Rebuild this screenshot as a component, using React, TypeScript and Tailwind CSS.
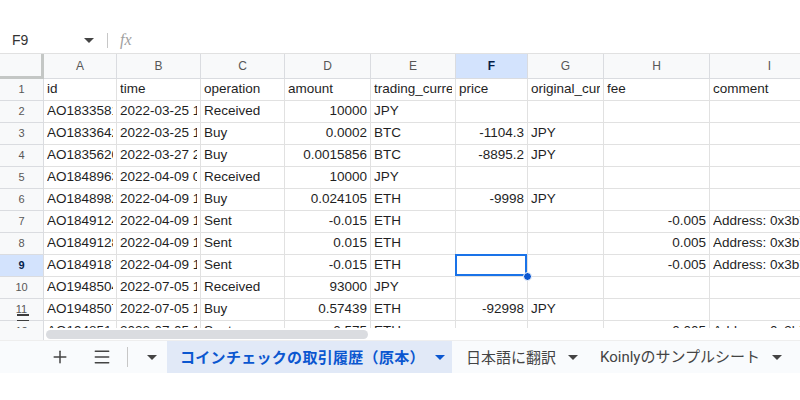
import { Plus, Menu } from "lucide-react";

type Row = { n: number; cells: (string | number | null)[] };

const cols = [
  { k: "A", w: 73 },
  { k: "B", w: 84 },
  { k: "C", w: 84 },
  { k: "D", w: 86 },
  { k: "E", w: 85 },
  { k: "F", w: 72 },
  { k: "G", w: 76 },
  { k: "H", w: 106 },
  { k: "I", w: 120 },
];

const rows: Row[] = [
  { n: 1, cells: ["id", "time", "operation", "amount", "trading_currency", "price", "original_currency", "fee", "comment"] },
  { n: 2, cells: ["AO18335812", "2022-03-25 13:11:02", "Received", 10000, "JPY", null, null, null, null] },
  { n: 3, cells: ["AO18336421", "2022-03-25 13:40:18", "Buy", 0.0002, "BTC", -1104.3, "JPY", null, null] },
  { n: 4, cells: ["AO18356205", "2022-03-27 21:05:44", "Buy", 0.0015856, "BTC", -8895.2, "JPY", null, null] },
  { n: 5, cells: ["AO18489633", "2022-04-09 09:12:51", "Received", 10000, "JPY", null, null, null, null] },
  { n: 6, cells: ["AO18489820", "2022-04-09 10:02:37", "Buy", 0.024105, "ETH", -9998, "JPY", null, null] },
  { n: 7, cells: ["AO18491241", "2022-04-09 10:31:09", "Sent", -0.015, "ETH", null, null, -0.005, "Address: 0x3b7c2f"] },
  { n: 8, cells: ["AO18491288", "2022-04-09 10:31:09", "Sent", 0.015, "ETH", null, null, 0.005, "Address: 0x3b7c2f"] },
  { n: 9, cells: ["AO18491874", "2022-04-09 10:45:22", "Sent", -0.015, "ETH", null, null, -0.005, "Address: 0x3b7c2f"] },
  { n: 10, cells: ["AO19485040", "2022-07-05 11:20:13", "Received", 93000, "JPY", null, null, null, null] },
  { n: 11, cells: ["AO19485071", "2022-07-05 11:25:40", "Buy", 0.57439, "ETH", -92998, "JPY", null, null] },
  { n: 12, cells: ["AO19485144", "2022-07-05 11:58:02", "Sent", -0.575, "ETH", null, null, -0.005, "Address: 0x3b7c2f"] },
];

const cellFont = { fontFamily: '"Liberation Sans", Arial, sans-serif' };

function Caret({ className }: { className: string }) {
  return (
    <svg width="10" height="5" viewBox="0 0 10 5" className={className}>
      <path d="M0 0h10L5 5z" fill="currentColor" />
    </svg>
  );
}

export default function App() {
  return (
    <div className="w-[800px] h-[400px] overflow-hidden bg-white flex flex-col text-[#1f1f1f]" style={cellFont}>
      <div className="h-[27px] shrink-0" />

      {/* formula bar */}
      <div className="h-[27px] shrink-0 flex items-center border-b border-[#e1e1e1]">
        <div className="w-[104px] flex items-center pl-[12px] pr-[8px] justify-between">
          <span className="text-[14px] text-[#333]">F9</span>
          <Caret className="text-[#444] mr-[2px]" />
        </div>
        <div className="w-px h-[15px] bg-[#c7c7c7] ml-[3px]" />
        <span className="ml-[12px] text-[16px] italic text-[#a0a0a0]" style={{ fontFamily: '"Liberation Serif", serif' }}>fx</span>
      </div>

      {/* grid */}
      <div className="h-[274px] shrink-0 overflow-hidden">
        {/* column header */}
        <div className="flex h-[25px] bg-[#f8f9fa]">
          <div className="w-[44px] shrink-0 border-r-[3px] border-b-[3px] border-[#c4c7c5]" />
          {cols.map(c => (
            <div
              key={c.k}
              style={{ width: c.w }}
              className={`shrink-0 h-full flex items-center justify-center text-[12px] border-r border-b border-[#dadce0] ${
                c.k === "F" ? "bg-[#d3e3fd] font-bold text-[#041e49]" : "text-[#575757]"
              }`}
            >
              {c.k}
            </div>
          ))}
        </div>

        {rows.map(r => (
          <div key={r.n} className="flex h-[22px]">
            <div
              className={`w-[44px] shrink-0 relative flex items-center justify-center text-[11px] border-r border-b border-[#dadce0] ${
                r.n === 9 ? "bg-[#d3e3fd] font-bold text-[#041e49]" : "bg-[#f8f9fa] text-[#575757]"
              }`}
            >
              {r.n}
              {r.n === 11 && (
                <>
                  <span className="absolute left-[17px] top-[15px] w-[12px] h-[2px] bg-[#3c3c3c]" />
                  <span className="absolute left-[17px] top-[21px] w-[12px] h-[3px] bg-[#3c3c3c]" />
                </>
              )}
            </div>
            {cols.map((c, i) => {
              const v = r.cells[i];
              const num = typeof v === "number";
              const selected = r.n === 9 && c.k === "F";
              return (
                <div
                  key={c.k}
                  style={{ width: c.w }}
                  className="shrink-0 h-full relative flex items-center px-[3px] text-[13.5px] whitespace-nowrap border-r border-b border-[#e1e1e1]"
                >
                  <span className={`min-w-0 flex-1 overflow-hidden ${num ? "text-right" : "text-left"}`}>
                    {v === null ? "" : String(v)}
                  </span>
                  {selected && (
                    <>
                      <span className="absolute -left-px -top-px w-[calc(100%+1px)] h-[calc(100%+1px)] border-2 border-[#1a73e8]" />
                      <span className="absolute z-10 -right-[5px] -bottom-[5px] w-[9px] h-[9px] rounded-full bg-[#0b57d0] border border-white" />
                    </>
                  )}
                </div>
              );
            })}
          </div>
        ))}
      </div>

      {/* horizontal scrollbar */}
      <div className="h-[12px] shrink-0 flex bg-[#f8f9fa]">
        <div className="w-[44px] shrink-0 border-r border-[#dadce0]" />
        <div className="flex-1 bg-white flex items-center pl-[2px]">
          <div className="w-[322px] h-[9px] rounded-full bg-[#dadce0]" />
        </div>
      </div>

      {/* sheet tabs */}
      <div className="h-[33px] shrink-0 flex items-center bg-[#f9fbfd] border-t border-[#eeeeee]" style={{ fontFamily: 'Roboto, "Noto Sans CJK JP", sans-serif' }}>
        <div className="w-[50px]" />
        <Plus size={20} strokeWidth={1.8} className="text-[#444]" />
        <Menu size={20} strokeWidth={1.8} className="text-[#444] ml-[22px]" />
        <div className="w-px h-[20px] bg-[#c7c7c7] ml-[15px]" />
        <Caret className="text-[#444] ml-[19px]" />
        <div className="ml-[10px] h-full w-[285px] bg-[#e1e9f7] flex items-center pl-[13px]">
          <span className="text-[15px] font-bold text-[#0b57d0] tracking-[0.3px]" style={{ fontFamily: '"Noto Sans CJK JP", sans-serif' }}>コインチェックの取引履歴（原本）</span>
          <Caret className="text-[#0b57d0] ml-[10px]" />
        </div>
        <div className="h-full flex items-center pl-[14px]">
          <span className="text-[15px] text-[#444]" style={{ fontFamily: '"Noto Sans CJK JP", sans-serif' }}>日本語に翻訳</span>
          <Caret className="text-[#444] ml-[12px]" />
        </div>
        <div className="h-full flex items-center pl-[22px]">
          <span className="text-[15px] text-[#444]" style={{ fontFamily: 'Roboto, "Noto Sans CJK JP", sans-serif' }}>Koinlyのサンプルシート</span>
          <Caret className="text-[#444] ml-[12px]" />
        </div>
      </div>

      <div className="flex-1 bg-white" />
    </div>
  );
}
